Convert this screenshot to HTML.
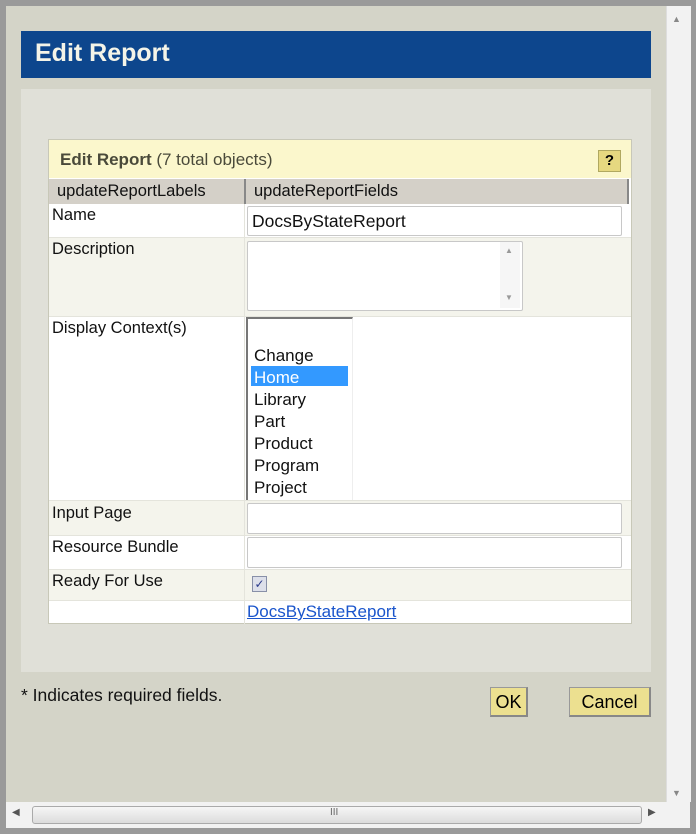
<!DOCTYPE html><html><head><style>
body{margin:0;width:696px;height:834px;background:#f0f0f0;position:relative;overflow:hidden;font-family:"Liberation Sans",sans-serif;}
.a{position:absolute;white-space:nowrap}
.lbl{font-size:16.5px;color:#111}
.inp{position:absolute;background:#fff;border:1px solid #c8c8c8;border-radius:2px}
</style></head><body>
<div class="a" style="left:0;top:0;width:696px;height:834px;background:#9a9a9a"></div>
<div class="a" style="left:6px;top:6px;width:662px;height:796px;background:#d4d4c8"></div>
<div class="a" style="left:666px;top:6px;width:24px;height:796px;background:#f2f2f2;border-left:1px solid #ddd"></div>
<div class="a" style="left:672px;top:14px;font-size:9px;color:#888">▲</div>
<div class="a" style="left:672px;top:788px;font-size:9px;color:#888">▼</div>
<div class="a" style="left:6px;top:802px;width:684px;height:26px;background:#f2f2f2"></div>
<div class="a" style="left:32px;top:806px;width:608px;height:16px;background:linear-gradient(#f6f6f6,#dcdcdc);border:1px solid #aaa;border-radius:3px"></div>
<div class="a" style="left:330px;top:807px;font-size:10px;color:#666">III</div>
<div class="a" style="left:12px;top:807px;font-size:10px;color:#555">◀</div>
<div class="a" style="left:648px;top:807px;font-size:10px;color:#555">▶</div>

<div class="a" style="left:21px;top:31px;width:630px;height:47px;background:#0d468d"></div>
<div class="a" style="left:35px;top:39px;font-size:25px;font-weight:bold;color:#f4f4e8">Edit Report</div>
<div class="a" style="left:21px;top:89px;width:630px;height:583px;background:#e0e0d8"></div>

<div class="a" style="left:48px;top:139px;width:584px;height:485px;background:#fff;border:1px solid #c8c8b8;box-sizing:border-box"></div>
<div class="a" style="left:49px;top:140px;width:582px;height:38px;background:#fbf7cc"></div>
<div class="a" style="left:60px;top:150px;font-size:17px;color:#4a4a3a"><b>Edit Report</b> (7 total objects)</div>
<div class="a" style="left:598px;top:150px;width:23px;height:22px;background:#e6d880;border:1px solid #b0a860;box-sizing:border-box;text-align:center;font-weight:bold;font-size:15px;line-height:20px">?</div>
<div class="a" style="left:49px;top:179px;width:578px;height:25px;background:#d4d0c8;border-right:2px solid #888"></div>
<div class="a" style="left:244px;top:179px;width:2px;height:25px;background:#888"></div>
<div class="a lbl" style="left:57px;top:182px">updateReportLabels</div>
<div class="a lbl" style="left:254px;top:182px">updateReportFields</div>
<div class="a" style="left:49px;top:238px;width:582px;height:78px;background:#f4f4ec"></div>
<div class="a" style="left:49px;top:501px;width:582px;height:34px;background:#f4f4ec"></div>
<div class="a" style="left:49px;top:570px;width:582px;height:30px;background:#f4f4ec"></div>
<div class="a" style="left:244px;top:204px;width:1px;height:420px;background:#e4e4dc"></div>
<div class="a" style="left:49px;top:237px;width:582px;height:1px;background:#e4e4dc"></div>
<div class="a" style="left:49px;top:316px;width:582px;height:1px;background:#e4e4dc"></div>
<div class="a" style="left:49px;top:500px;width:582px;height:1px;background:#e4e4dc"></div>
<div class="a" style="left:49px;top:535px;width:582px;height:1px;background:#e4e4dc"></div>
<div class="a" style="left:49px;top:569px;width:582px;height:1px;background:#e4e4dc"></div>
<div class="a" style="left:49px;top:600px;width:582px;height:1px;background:#e4e4dc"></div>

<div class="a lbl" style="left:52px;top:206px">Name</div>
<div class="a lbl" style="left:52px;top:240px">Description</div>
<div class="a lbl" style="left:52px;top:319px">Display Context(s)</div>
<div class="a lbl" style="left:52px;top:504px">Input Page</div>
<div class="a lbl" style="left:52px;top:538px">Resource Bundle</div>
<div class="a lbl" style="left:52px;top:572px">Ready For Use</div>

<div class="inp" style="left:247px;top:206px;width:373px;height:28px"></div>
<div class="a lbl" style="left:252px;top:211px;font-size:17.5px">DocsByStateReport</div>
<div class="inp" style="left:247px;top:241px;width:274px;height:68px"></div>
<div class="a" style="left:500px;top:242px;width:20px;height:66px;background:#f6f6f6"></div>
<div class="a" style="left:505px;top:246px;font-size:8px;color:#999">▲</div>
<div class="a" style="left:505px;top:293px;font-size:8px;color:#999">▼</div>
<div class="a" style="left:246px;top:317px;width:104px;height:181px;background:#fff;border-left:2px solid #777;border-top:2px solid #777;border-right:1px solid #eee"></div>
<div class="a" style="left:251px;top:366px;width:97px;height:20px;background:#3399ff"></div>
<div class="a" style="left:254px;top:345px;font-size:17px;line-height:22px;color:#111">Change<br><span style="color:#fff">Home</span><br>Library<br>Part<br>Product<br>Program<br>Project</div>
<div class="inp" style="left:247px;top:503px;width:373px;height:29px"></div>
<div class="inp" style="left:247px;top:537px;width:373px;height:29px"></div>
<div class="a" style="left:252px;top:576px;width:15px;height:16px;background:#dde0ea;border:1px solid #8890a8;box-sizing:border-box;font-size:12px;line-height:14px;text-align:center;color:#2a3a8a">✓</div>
<div class="a" style="left:247px;top:602px;font-size:17px;color:#1a55cc;text-decoration:underline">DocsByStateReport</div>

<div class="a" style="left:21px;top:685px;font-size:17.5px;color:#111">* Indicates required fields.</div>
<div class="a" style="left:490px;top:687px;width:38px;height:30px;background:#ece090;border:1px solid #999;border-right:2px solid #888;border-bottom:2px solid #888;box-sizing:border-box;text-align:center;font-size:18px;line-height:28px">OK</div>
<div class="a" style="left:569px;top:687px;width:82px;height:30px;background:#ece090;border:1px solid #999;border-right:2px solid #888;border-bottom:2px solid #888;box-sizing:border-box;text-align:center;font-size:18px;line-height:28px">Cancel</div>
</body></html>
